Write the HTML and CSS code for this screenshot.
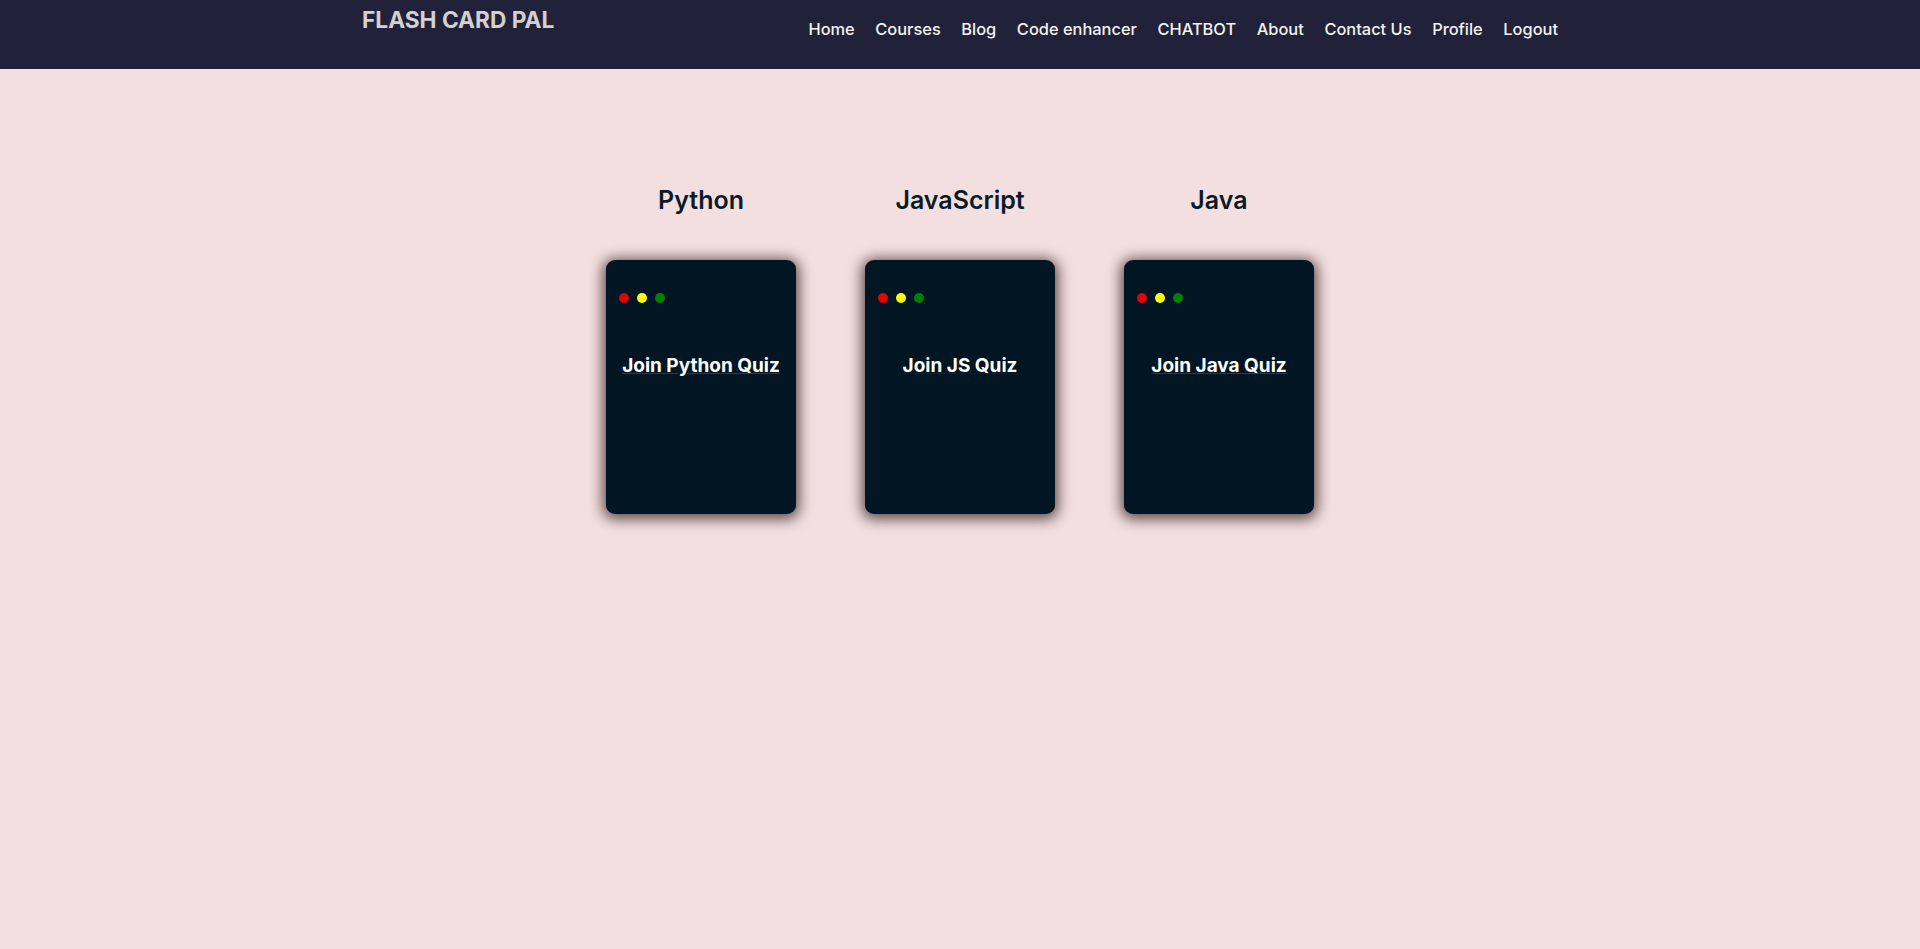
FILE: index.html
```html
<!DOCTYPE html>
<html lang="en">
<head>
<meta charset="utf-8">
<title>Flash Card Pal</title>
<link rel="stylesheet" href="styles.css">
</head>
<body>
<header class="navbar">
  <div class="nav-inner">
    <div class="logo">FLASH CARD PAL</div>
    <nav class="links">
      <a href="#">Home</a>
      <a href="#">Courses</a>
      <a href="#">Blog</a>
      <a href="#">Code enhancer</a>
      <a href="#">CHATBOT</a>
      <a href="#">About</a>
      <a href="#">Contact Us</a>
      <a href="#">Profile</a>
      <a href="#">Logout</a>
    </nav>
  </div>
</header>
<main class="quizzes">
  <section class="quiz">
    <h2 class="quiz-title">Python</h2>
    <div class="card">
      <div class="dots"><span class="dot red"></span><span class="dot yellow"></span><span class="dot green"></span></div>
      <a class="join visited" href="#"><span class="join-text">Join Python Quiz</span></a>
    </div>
  </section>
  <section class="quiz">
    <h2 class="quiz-title">JavaScript</h2>
    <div class="card">
      <div class="dots"><span class="dot red"></span><span class="dot yellow"></span><span class="dot green"></span></div>
      <a class="join fresh" href="#"><span class="join-text">Join JS Quiz</span></a>
    </div>
  </section>
  <section class="quiz">
    <h2 class="quiz-title">Java</h2>
    <div class="card">
      <div class="dots"><span class="dot red"></span><span class="dot yellow"></span><span class="dot green"></span></div>
      <a class="join visited" href="#"><span class="join-text">Join Java Quiz</span></a>
    </div>
  </section>
</main>
</body>
</html>
```
FILE: styles.css
```css
* { box-sizing: border-box; }
html, body { margin: 0; padding: 0; }
body {
  background: #f3dfdf;
  font-family: Inter, "Open Sans", sans-serif;
  min-height: 949px;
}
.navbar {
  background: #22213a;
  height: 69px;
}
.nav-inner {
  width: 1200px;
  margin: 0 auto;
  display: flex;
  align-items: flex-start;
  padding: 0 2px;
}
.logo {
  font-size: 22.7px;
  font-weight: 700;
  color: #d3d0d0;
  line-height: 34px;
  margin-top: 2.5px;
}
.links {
  margin-left: auto;
  display: flex;
  gap: 20.6px;
  padding-top: 19.3px;
}
.links a {
  color: #f2f2f2;
  text-decoration: none;
  font-size: 16.4px;
  font-weight: 500;
  line-height: 20px;
}
.quizzes {
  display: flex;
  justify-content: center;
  gap: 69px;
  padding-top: 113px;
}
.quiz {
  width: 190px;
  display: flex;
  flex-direction: column;
  align-items: center;
}
.quiz-title {
  margin: 0;
  font-size: 25px;
  font-weight: 600;
  color: #0c1a26;
  line-height: 36px;
}
.card {
  margin-top: 42px;
  width: 190px;
  height: 254px;
  background: #011523;
  border-radius: 9px;
  box-shadow: 0 2px 14px 3px rgba(40, 20, 20, 0.75);
  display: flex;
  flex-direction: column;
  padding: 33px 13px 0;
}
.dots {
  display: flex;
  gap: 8px;
}
.dot {
  width: 10px;
  height: 10px;
  border-radius: 50%;
}
.red { background: #e60000; }
.yellow { background: #ffff00; }
.green { background: #008000; }
.join {
  margin-top: 50px;
  align-self: center;
  font-size: 19px;
  font-weight: 700;
  line-height: 26px;
}
.join.visited { color: #551a8b; }
.join.fresh { color: #0000ee; }
.join-text { color: #ffffff; }
```
